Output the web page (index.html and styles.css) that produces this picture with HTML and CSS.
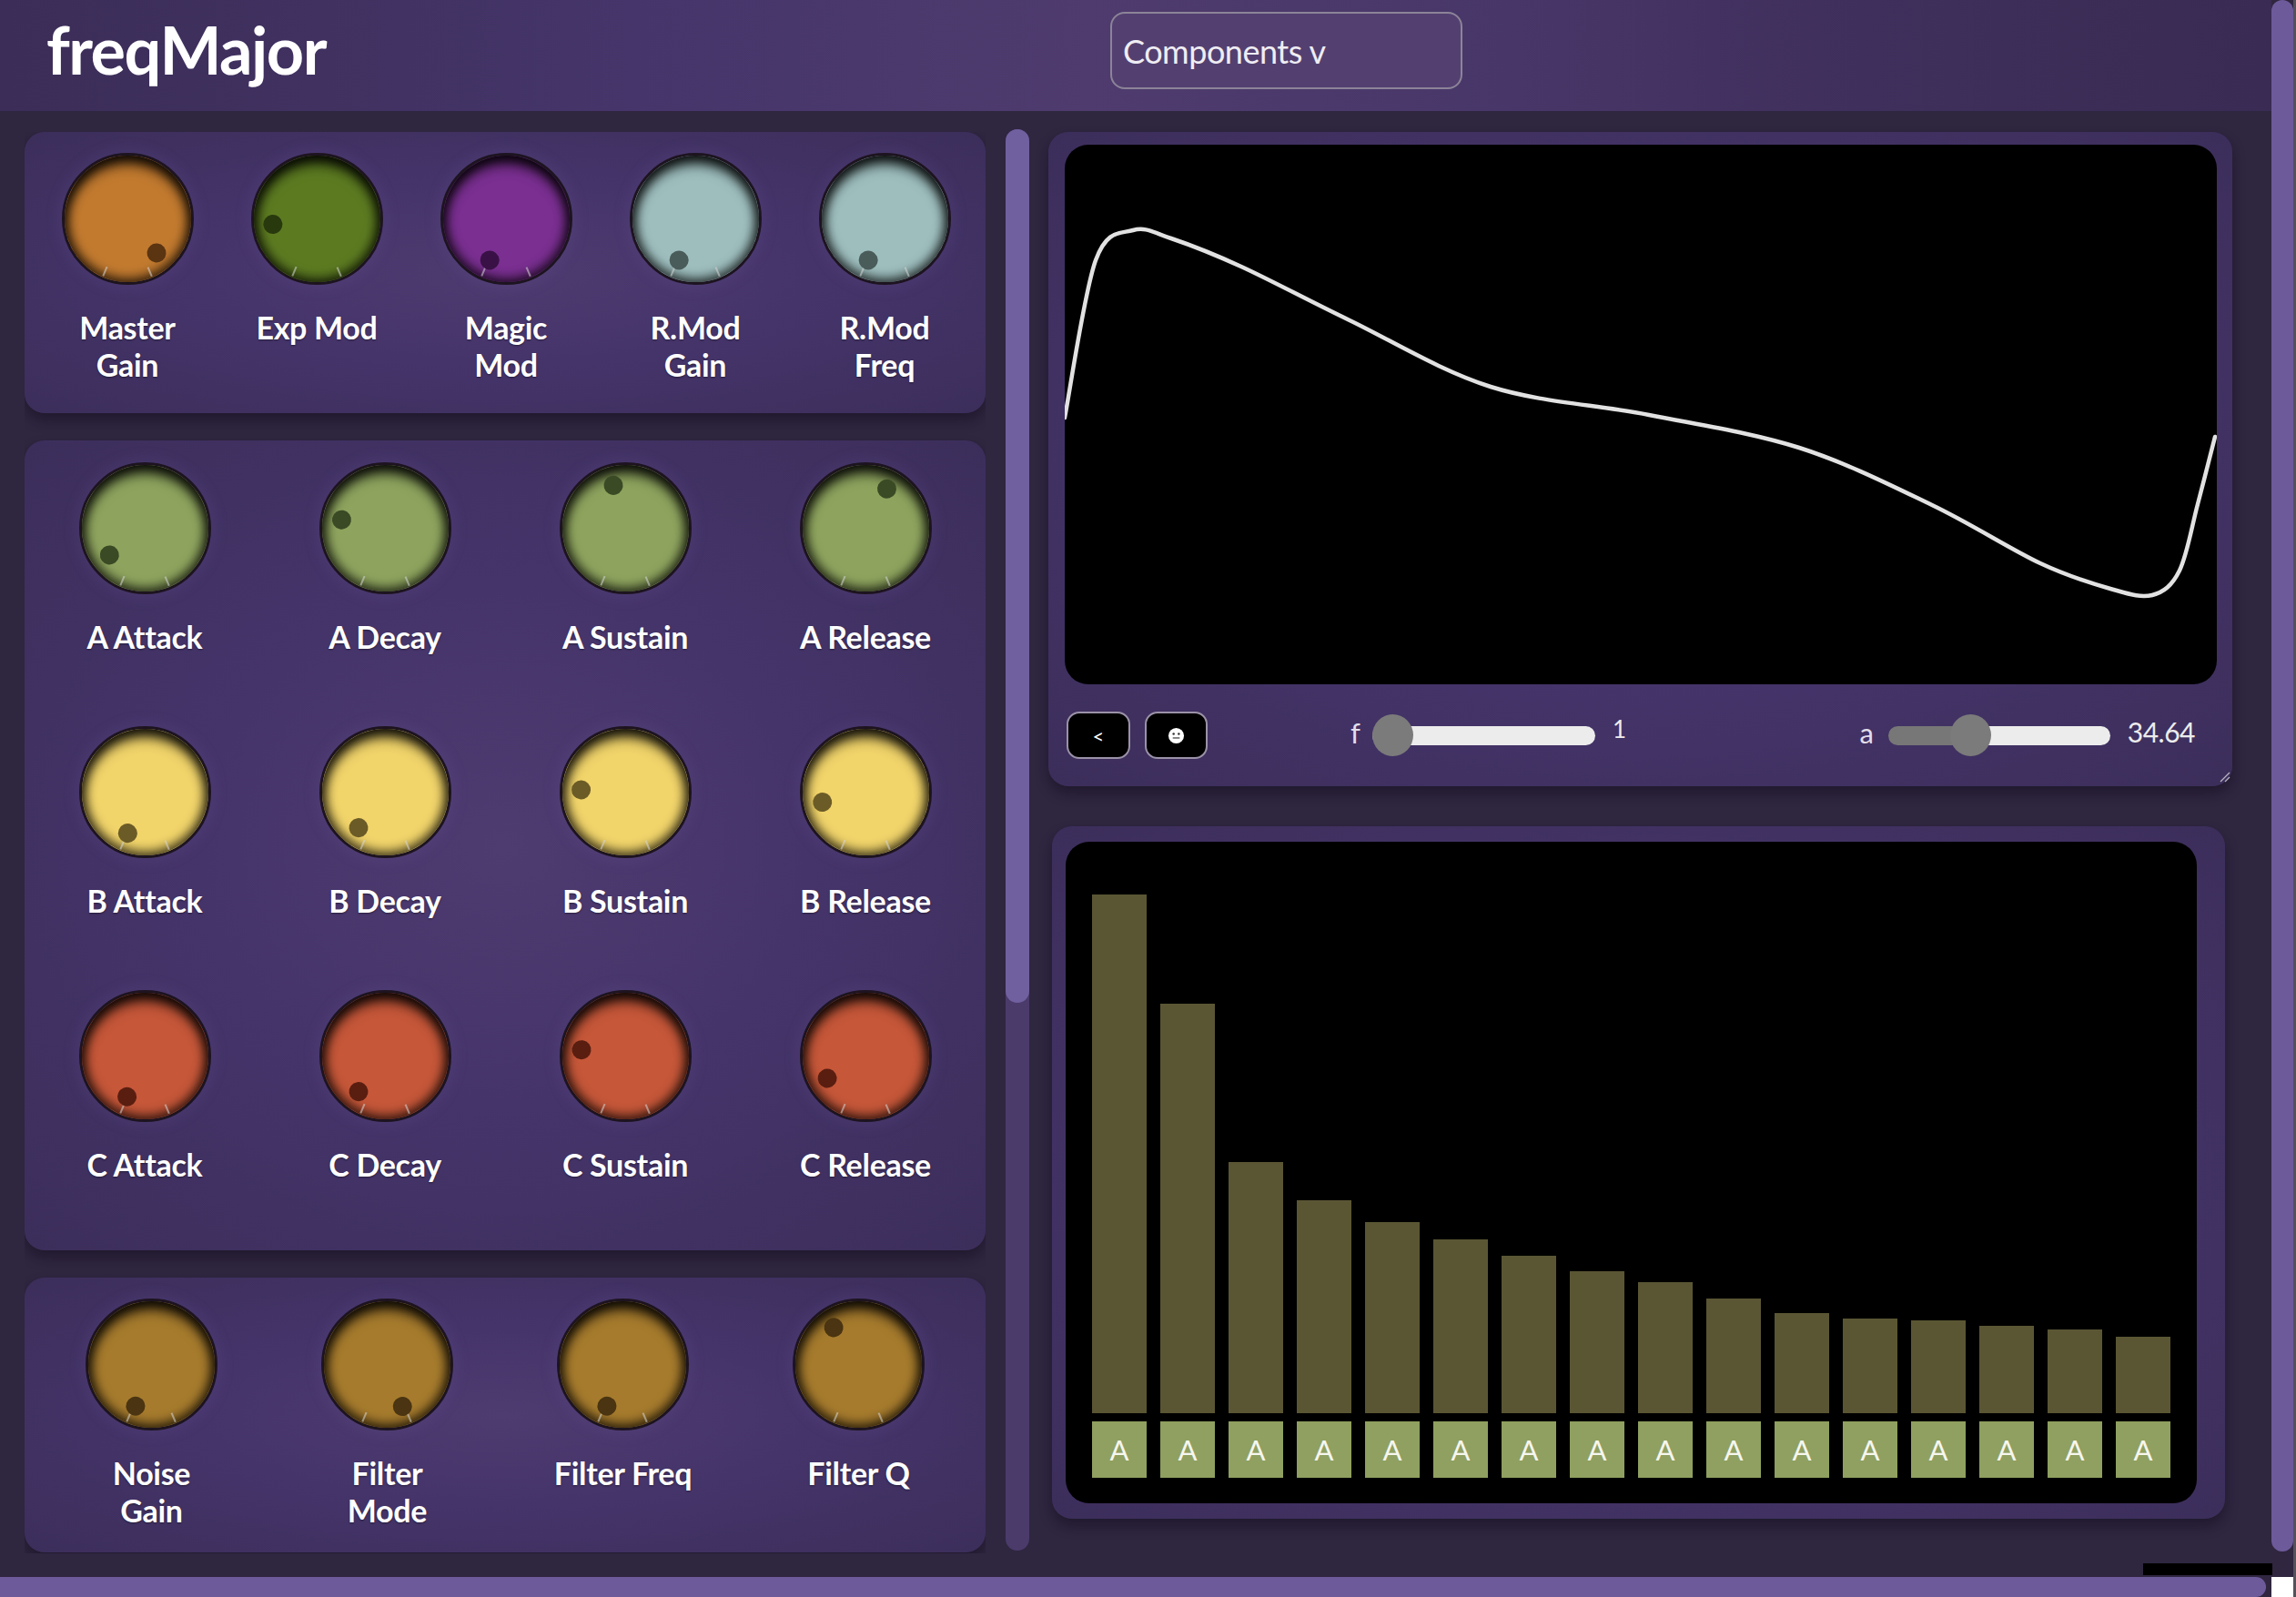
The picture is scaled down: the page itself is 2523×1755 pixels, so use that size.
FILE: index.html
```html
<!DOCTYPE html>
<html lang="en">
<head>
<meta charset="utf-8">
<title>freqMajor</title>
<link rel="stylesheet" href="styles.css">
</head>
<body>
<div class="window">
  <div class="app">
    <header class="topbar">
      <div class="brand">freqMajor</div>
      <div class="dropdown">Components v</div>
    </header>
    <main class="main">
      <div class="left-col">
        <section class="panel panel-top">
          <div class="ctl"><div class="knob c-orange" style="--a:140deg"><i class="tick l"></i><i class="tick r"></i><span class="ind"></span></div><div class="lbl">Master<br>Gain</div></div>
          <div class="ctl"><div class="knob c-green" style="--a:-97deg"><i class="tick l"></i><i class="tick r"></i><span class="ind"></span></div><div class="lbl">Exp Mod</div></div>
          <div class="ctl"><div class="knob c-purple" style="--a:-158deg"><i class="tick l"></i><i class="tick r"></i><span class="ind"></span></div><div class="lbl">Magic<br>Mod</div></div>
          <div class="ctl"><div class="knob c-blue" style="--a:-158deg"><i class="tick l"></i><i class="tick r"></i><span class="ind"></span></div><div class="lbl">R.Mod<br>Gain</div></div>
          <div class="ctl"><div class="knob c-blue" style="--a:-158deg"><i class="tick l"></i><i class="tick r"></i><span class="ind"></span></div><div class="lbl">R.Mod<br>Freq</div></div>
        </section>
        <section class="panel panel-env">
          <div class="ctl"><div class="knob c-olive" style="--a:-127deg"><i class="tick l"></i><i class="tick r"></i><span class="ind"></span></div><div class="lbl">A Attack</div></div>
          <div class="ctl"><div class="knob c-olive" style="--a:-79deg"><i class="tick l"></i><i class="tick r"></i><span class="ind"></span></div><div class="lbl">A Decay</div></div>
          <div class="ctl"><div class="knob c-olive" style="--a:-16deg"><i class="tick l"></i><i class="tick r"></i><span class="ind"></span></div><div class="lbl">A Sustain</div></div>
          <div class="ctl"><div class="knob c-olive" style="--a:28deg"><i class="tick l"></i><i class="tick r"></i><span class="ind"></span></div><div class="lbl">A Release</div></div>
          <div class="ctl"><div class="knob c-yellow" style="--a:-157deg"><i class="tick l"></i><i class="tick r"></i><span class="ind"></span></div><div class="lbl">B Attack</div></div>
          <div class="ctl"><div class="knob c-yellow" style="--a:-143deg"><i class="tick l"></i><i class="tick r"></i><span class="ind"></span></div><div class="lbl">B Decay</div></div>
          <div class="ctl"><div class="knob c-yellow" style="--a:-87deg"><i class="tick l"></i><i class="tick r"></i><span class="ind"></span></div><div class="lbl">B Sustain</div></div>
          <div class="ctl"><div class="knob c-yellow" style="--a:-103deg"><i class="tick l"></i><i class="tick r"></i><span class="ind"></span></div><div class="lbl">B Release</div></div>
          <div class="ctl"><div class="knob c-red" style="--a:-156deg"><i class="tick l"></i><i class="tick r"></i><span class="ind"></span></div><div class="lbl">C Attack</div></div>
          <div class="ctl"><div class="knob c-red" style="--a:-143deg"><i class="tick l"></i><i class="tick r"></i><span class="ind"></span></div><div class="lbl">C Decay</div></div>
          <div class="ctl"><div class="knob c-red" style="--a:-82deg"><i class="tick l"></i><i class="tick r"></i><span class="ind"></span></div><div class="lbl">C Sustain</div></div>
          <div class="ctl"><div class="knob c-red" style="--a:-120deg"><i class="tick l"></i><i class="tick r"></i><span class="ind"></span></div><div class="lbl">C Release</div></div>
        </section>
        <section class="panel panel-filter">
          <div class="ctl"><div class="knob c-mustard" style="--a:-159deg"><i class="tick l"></i><i class="tick r"></i><span class="ind"></span></div><div class="lbl">Noise<br>Gain</div></div>
          <div class="ctl"><div class="knob c-mustard" style="--a:160deg"><i class="tick l"></i><i class="tick r"></i><span class="ind"></span></div><div class="lbl">Filter<br>Mode</div></div>
          <div class="ctl"><div class="knob c-mustard" style="--a:-159deg"><i class="tick l"></i><i class="tick r"></i><span class="ind"></span></div><div class="lbl">Filter Freq</div></div>
          <div class="ctl"><div class="knob c-mustard" style="--a:-34deg"><i class="tick l"></i><i class="tick r"></i><span class="ind"></span></div><div class="lbl">Filter Q</div></div>
        </section>
      </div>
      <div class="inner-track"><div class="inner-thumb"></div></div>
      <div class="right-col">
        <section class="panel scope">
          <div class="scope-canvas">
            <svg class="wave" viewBox="0 0 1266 593" preserveAspectRatio="none">
              <path d="M0,300 C5.7,271.2 21.5,161.3 34,127 C46.5,92.7 61.2,98 75,94 C88.8,90 97.2,96.3 117,103 C136.8,109.7 161.3,119 194,134 C226.7,149 267.3,171 313,193 C358.7,215 413.2,248.7 468,266 C522.8,283.3 585.5,285.8 642,297 C698.5,308.2 755.2,316.5 807,333 C858.8,349.5 908.8,374.8 953,396 C997.2,417.2 1039.3,444.7 1072,460 C1104.7,475.3 1128.5,482.2 1149,488 C1169.5,493.8 1182.3,498.3 1195,495 C1207.7,491.7 1216.7,484.7 1225,468 C1233.3,451.3 1238.5,419.5 1245,395 C1251.5,370.5 1260.8,333.3 1264,321"/>
            </svg>
          </div>
          <div class="controls">
            <div class="btn">&lt;</div>
            <div class="btn btn2"><svg class="face" viewBox="0 0 20 20"><circle cx="10" cy="10" r="9" fill="#fff"/><circle cx="7" cy="8" r="1.3" fill="#333"/><circle cx="13" cy="8" r="1.3" fill="#333"/><rect x="6" y="12" width="8" height="1.2" fill="#333"/></svg></div>
            <span class="sl-label f-label">f</span>
            <div class="slider f-slider"><div class="track" style="--p:0px"></div><div class="thumb" style="left:0px"></div></div>
            <span class="sl-val v1">1</span>
            <span class="sl-label a-label">a</span>
            <div class="slider a-slider"><div class="track" style="--p:91px"></div><div class="thumb" style="left:68px"></div></div>
            <span class="sl-val v2">34.64</span>
          </div>
          <svg class="resizer" viewBox="0 0 14 14"><line x1="13" y1="3" x2="3" y2="13"/><line x1="13" y1="8" x2="8" y2="13"/></svg>
        </section>
        <section class="panel spectrum">
          <div class="spec-canvas">
            <div class="col"><div class="bar" style="height:570px"></div><div class="tag">A</div></div>
            <div class="col"><div class="bar" style="height:450px"></div><div class="tag">A</div></div>
            <div class="col"><div class="bar" style="height:276px"></div><div class="tag">A</div></div>
            <div class="col"><div class="bar" style="height:234px"></div><div class="tag">A</div></div>
            <div class="col"><div class="bar" style="height:210px"></div><div class="tag">A</div></div>
            <div class="col"><div class="bar" style="height:191px"></div><div class="tag">A</div></div>
            <div class="col"><div class="bar" style="height:173px"></div><div class="tag">A</div></div>
            <div class="col"><div class="bar" style="height:156px"></div><div class="tag">A</div></div>
            <div class="col"><div class="bar" style="height:144px"></div><div class="tag">A</div></div>
            <div class="col"><div class="bar" style="height:126px"></div><div class="tag">A</div></div>
            <div class="col"><div class="bar" style="height:110px"></div><div class="tag">A</div></div>
            <div class="col"><div class="bar" style="height:104px"></div><div class="tag">A</div></div>
            <div class="col"><div class="bar" style="height:102px"></div><div class="tag">A</div></div>
            <div class="col"><div class="bar" style="height:96px"></div><div class="tag">A</div></div>
            <div class="col"><div class="bar" style="height:92px"></div><div class="tag">A</div></div>
            <div class="col"><div class="bar" style="height:84px"></div><div class="tag">A</div></div>
          </div>
        </section>
      </div>
    </main>
  </div>
  <div class="vscroll"><div class="vthumb"></div></div>
  <div class="edge"></div>
  <div class="hscroll-row"><div class="hthumb"></div><div class="corner"></div></div>
  <div class="blackbar"></div>
</div>
</body>
</html>
```

FILE: styles.css
```css
* { box-sizing: border-box; }

body {
  margin: 0;
  background: #2f2640;
  overflow: hidden;
  font-family: Lato, "Open Sans", sans-serif;
}

.window {
  width: 2523px;
  height: 1755px;
  display: grid;
  grid-template-columns: 2496px 24px 3px;
  grid-template-rows: 1733px 22px;
  position: relative;
  background: #2f2640;
}

.app {
  grid-column: 1;
  grid-row: 1;
  display: flex;
  flex-direction: column;
  min-height: 0;
  overflow: hidden;
}

.topbar {
  height: 122px;
  flex: none;
  display: grid;
  grid-template-columns: 1220px 387px;
  align-items: start;
  background: linear-gradient(90deg, #3b2d57 0%, #45356a 28%, #4f3b6e 48%, #4a386b 62%, #3f2f5c 82%, #392b53 100%);
}

.brand {
  margin: 18px 0 0 51px;
  font: 700 72px/72px Lato, sans-serif;
  letter-spacing: -1.5px;
  color: #ffffff;
}

.dropdown {
  margin-top: 13px;
  height: 85px;
  border: 2px solid #8c8498;
  border-radius: 16px;
  background: #534071;
  display: flex;
  align-items: center;
  padding-left: 12px;
  font: 400 36px Lato, sans-serif;
  letter-spacing: -0.5px;
  color: #efedf3;
}

.main {
  flex: 1;
  display: flex;
  padding: 23px 0 0 27px;
  min-height: 0;
}

.left-col {
  flex: none;
  width: 1056px;
  height: 1562px;
  display: flex;
  flex-direction: column;
  gap: 30px;
  overflow: hidden;
}

.inner-track {
  flex: none;
  width: 26px;
  height: 1562px;
  margin: -3px 21px 0 22px;
  background: #4b3b6b;
  border-radius: 13px;
}

.inner-thumb {
  height: 960px;
  background: #7160a0;
  border-radius: 13px;
}

.panel {
  flex: none;
  border-radius: 22px;
  background: radial-gradient(ellipse at 50% 50%, #4e3b70 0%, #45346a 45%, #3c2e5b 100%);
  box-shadow: 0 8px 14px rgba(15, 10, 25, 0.45);
  position: relative;
}

.panel-top {
  display: grid;
  grid-template-columns: repeat(5, 1fr);
  padding: 23px 7px 33px 9px;
}

.panel-env {
  display: grid;
  grid-template-columns: repeat(4, 1fr);
  row-gap: 37px;
  padding: 24px 0 33px;
}

.panel-filter {
  display: grid;
  grid-template-columns: repeat(4, 1fr);
  padding: 23px 10px 26px;
}

.ctl {
  display: flex;
  flex-direction: column;
  align-items: center;
}

.knob {
  width: 145px;
  height: 145px;
  border-radius: 50%;
  position: relative;
  margin-bottom: 26px;
  background: var(--c);
  border: 3px solid #1d1420;
  box-shadow:
    inset 0 12px 16px -4px rgba(0, 0, 0, 0.8),
    inset 0 0 12px 4px rgba(0, 0, 0, 0.75),
    0 0 14px 6px rgba(110, 95, 160, 0.14);
}

.ind, .tick {
  position: absolute;
  inset: 0;
}

.ind { transform: rotate(var(--a)); }

.ind::before {
  content: "";
  position: absolute;
  left: 50%;
  top: 10px;
  width: 21px;
  height: 21px;
  margin-left: -10.5px;
  border-radius: 50%;
  background: var(--d);
}

.tick::before {
  content: "";
  position: absolute;
  left: 50%;
  top: 1px;
  width: 2px;
  height: 11px;
  margin-left: -1px;
  background: rgba(215, 215, 215, 0.55);
}

.tick.l { transform: rotate(-157deg); }
.tick.r { transform: rotate(157deg); }

.lbl {
  font: 700 34px/41px Lato, sans-serif;
  letter-spacing: -0.3px;
  min-height: 82px;
  text-align: center;
  color: #ffffff;
  text-shadow: 0 1px 2px rgba(0, 0, 0, 0.45);
}

.c-orange { --c: #c27a2f; --d: #5b3412; }
.c-green { --c: #5c7b21; --d: #28390e; }
.c-purple { --c: #7a2f91; --d: #391146; }
.c-blue { --c: #9ebebe; --d: #4a5c5a; }
.c-olive { --c: #8ea45e; --d: #3a4a25; }
.c-yellow { --c: #f1d46a; --d: #6b5b26; }
.c-red { --c: #c65739; --d: #591e10; }
.c-mustard { --c: #a67b2d; --d: #4a3411; }

.right-col {
  flex: none;
  width: 1301px;
  display: flex;
  flex-direction: column;
}

.scope {
  height: 719px;
  padding: 14px 17px 30px 18px;
}

.scope-canvas {
  height: 593px;
  background: #000;
  border-radius: 26px;
  overflow: hidden;
}

.wave {
  display: block;
  width: 100%;
  height: 100%;
}

.wave path {
  fill: none;
  stroke: #e2e2e2;
  stroke-width: 4.5;
  stroke-linejoin: round;
  stroke-linecap: round;
}

.controls {
  margin-top: 30px;
  height: 52px;
  display: flex;
  align-items: center;
  padding: 0 24px 0 2px;
}

.btn {
  flex: none;
  width: 70px;
  height: 52px;
  background: #000;
  border: 2px solid #9b92a8;
  border-radius: 14px;
  color: #fff;
  display: flex;
  align-items: center;
  justify-content: center;
  font: 400 22px Lato, sans-serif;
}

.btn2 {
  width: 69px;
  margin-left: 16px;
}

.face {
  width: 19px;
  height: 19px;
}

.sl-label {
  font: 400 31px Lato, sans-serif;
  color: #e2deea;
  margin-bottom: 6px;
}

.f-label { margin-left: 157px; }
.a-label { margin-left: auto; }

.slider {
  flex: none;
  position: relative;
  height: 46px;
  display: flex;
  align-items: center;
}

.f-slider { width: 245px; margin-left: 13px; }
.a-slider { width: 244px; margin-left: 16px; }

.track {
  flex: 1;
  height: 21px;
  border-radius: 11px;
  background: linear-gradient(90deg, #777 0, #777 var(--p), #ececec var(--p), #ececec 100%);
}

.thumb {
  position: absolute;
  top: 0;
  width: 45px;
  height: 46px;
  border-radius: 50%;
  background: #7b7b7b;
}

.sl-val {
  font: 400 28px Lato, sans-serif;
  color: #ececec;
  margin-left: 19px;
}

.v1 { margin-bottom: 14px; font-size: 26px; }
.v2 { margin-bottom: 8px; font-size: 30px; letter-spacing: -0.5px; }

.resizer {
  position: absolute;
  right: 2px;
  bottom: 4px;
  width: 14px;
  height: 14px;
}

.resizer line {
  stroke: #b8b4c0;
  stroke-width: 1.3;
}

.spectrum {
  margin-top: 44px;
  margin-left: 4px;
  width: 1289px;
  height: 761px;
  padding: 17px 31px 17px 15px;
}

.spec-canvas {
  height: 727px;
  background: #000;
  border-radius: 26px;
  display: flex;
  align-items: flex-end;
  justify-content: space-between;
  padding: 0 29px 28px;
}

.col {
  width: 60px;
  display: flex;
  flex-direction: column;
}

.bar {
  background: #5a5634;
}

.tag {
  margin-top: 9px;
  height: 62px;
  background: #8fa060;
  color: #f6f6ee;
  display: flex;
  align-items: center;
  justify-content: center;
  font: 400 31px Lato, sans-serif;
}

.vscroll {
  grid-column: 2;
  grid-row: 1;
  background: #30263f;
  padding-bottom: 28px;
}

.vthumb {
  height: 100%;
  background: #6d5a9b;
  border-radius: 12px;
}

.edge {
  grid-column: 3;
  grid-row: 1 / span 2;
  background: #55505a;
}

.hscroll-row {
  grid-column: 1 / span 2;
  grid-row: 2;
  display: flex;
  background: #30263f;
}

.hthumb {
  width: 2490px;
  background: #6d5a9b;
  border-radius: 0 11px 11px 0;
}

.corner {
  margin-left: auto;
  width: 24px;
  background: #ffffff;
}

.blackbar {
  position: absolute;
  left: 2355px;
  top: 1718px;
  width: 142px;
  height: 13px;
  background: #000;
}
```
